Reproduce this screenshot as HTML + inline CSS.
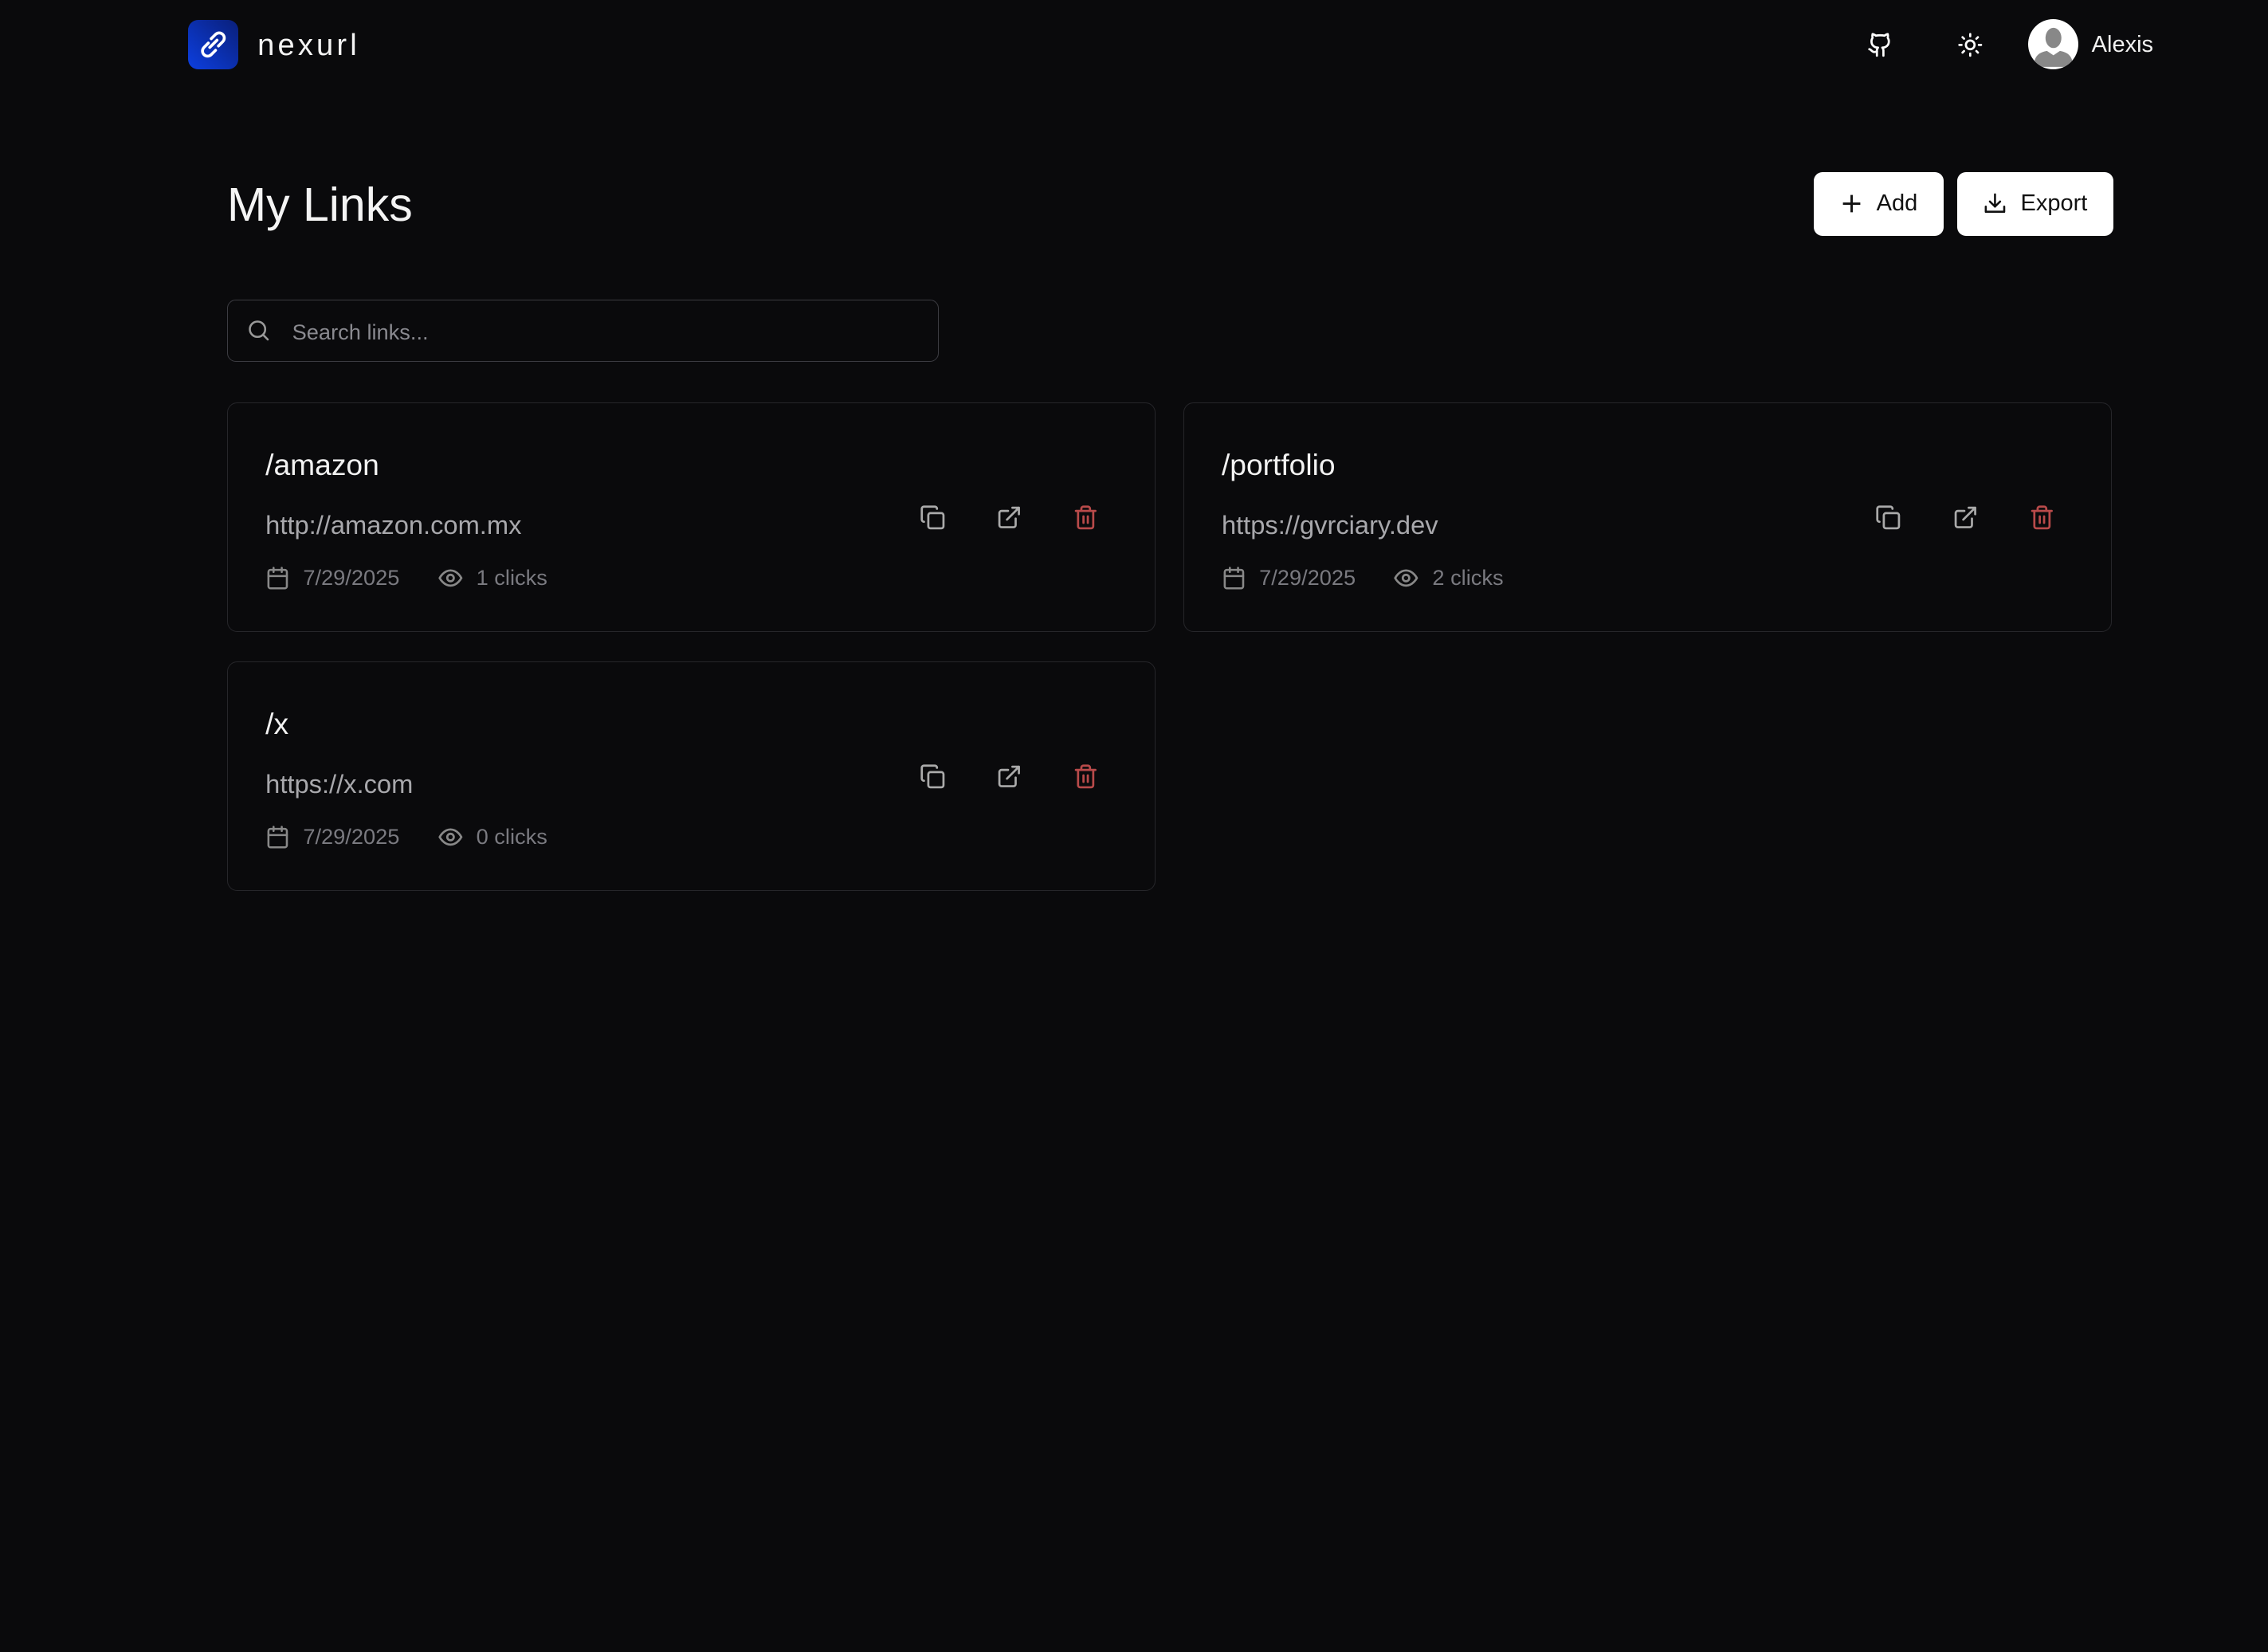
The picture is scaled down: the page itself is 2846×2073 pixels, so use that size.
<!DOCTYPE html>
<html><head><meta charset="utf-8"><style>
html,body{margin:0;padding:0;background:#0a0a0c;}
body{zoom:1.8151;width:1568px;height:1142px;position:relative;overflow:hidden;font-family:"Liberation Sans",sans-serif;color:#fff;}
.a{position:absolute;}
.logo{left:130px;top:14px;width:35px;height:34px;border-radius:7px;background:linear-gradient(225deg,#0a1f7a,#0c3fe0);}
svg{display:block}
.btn{background:#fff;border-radius:6px;color:#111;font-size:16px;display:flex;align-items:center;justify-content:center;gap:9px;}
.card{border:1px solid #26262a;border-radius:7px;width:641px;height:158px;}
.card .t{position:absolute;left:26px;top:31px;font-size:20.5px;color:#f2f2f2;}
.card .u{position:absolute;left:26px;top:74px;font-size:18px;color:#a8a8ac;}
.card .m{position:absolute;left:26px;top:112px;font-size:15px;color:#7a7a80;display:flex;align-items:center;}
.card .ic{position:absolute;top:70px;}
</style></head><body>
<div class="a logo"><svg width="35" height="34" viewBox="0 0 35 34"><g fill="none" stroke="#fff" stroke-width="2" stroke-linecap="round"><path d="M16 13l3-3a3.5 3.5 0 015 5l-3 3"/><path d="M19 21l-3 3a3.5 3.5 0 01-5-5l3-3"/><path d="M15 19l5-5"/></g></svg></div>
<div class="a" style="left:178px;top:20px;font-size:21px;letter-spacing:2.3px;color:#f4f4f4;">nexurl</div>
<div class="a" style="left:1291px;top:22px"><svg width="18" height="18" viewBox="0 0 24 24" fill="none" stroke="#fff" stroke-width="2" stroke-linecap="round" stroke-linejoin="round"><path d="M15 22v-4a4.8 4.8 0 00-1-3.5c3 0 6-2 6-5.5.08-1.25-.27-2.48-1-3.5.28-1.150.28-2.35 0-3.5 0 0-1 0-3 1.5-2.64-.5-5.36-.5-8 0C6 2 5 2 5 2c-.3 1.15-.3 2.35 0 3.5A5.4 5.4 0 004 9c0 3.5 3 5.5 6 5.5-.39.49-.68 1.05-.85 1.65-.17.6-.22 1.23-.15 1.85v4"/><path d="M9 18c-4.51 2-5-2-7-2"/></svg></div>
<div class="a" style="left:1353px;top:22px"><svg width="18" height="18" viewBox="0 0 24 24" fill="none" stroke="#fff" stroke-width="2" stroke-linecap="round"><circle cx="12" cy="12" r="4"/><path d="M12 2v2M12 20v2M4.9 4.9l1.4 1.4M17.7 17.7l1.4 1.4M2 12h2M20 12h2M6.3 17.7l-1.4 1.4M19.1 4.9l-1.4 1.4"/></svg></div>
<div class="a" style="left:1402px;top:13px;width:35px;height:35px;border-radius:50%;background:#fff;overflow:hidden"><svg width="35" height="35" viewBox="0 0 35 35"><ellipse cx="17.5" cy="13" rx="5.5" ry="7" fill="#888"/><path d="M4 33c0-8 4-10 9-11l4.5 3 4.5-3c5 1 9 3 9 11z" fill="#888"/></svg></div>
<div class="a" style="left:1446px;top:22px;font-size:16px;color:#f2f2f2">Alexis</div>

<div class="a" style="left:157px;top:123px;font-size:32.5px;color:#f4f4f4">My Links</div>
<div class="a btn" style="left:1254px;top:119px;width:90px;height:44px"><svg width="16" height="16" viewBox="0 0 16 16" stroke="#111" stroke-width="1.6"><path d="M8 2v12M2 8h12"/></svg>Add</div>
<div class="a btn" style="left:1353px;top:119px;width:108px;height:44px"><svg width="17" height="17" viewBox="0 0 24 24" fill="none" stroke="#111" stroke-width="2" stroke-linecap="round" stroke-linejoin="round"><path d="M3 15v5h18v-5M7 10l5 5 5-5M12 15V3"/></svg>Export</div>

<div class="a" style="left:157px;top:207px;width:491px;height:42px;border:1px solid #3c3c42;border-radius:6px"></div>
<div class="a" style="left:170px;top:220px"><svg width="17" height="17" viewBox="0 0 24 24" fill="none" stroke="#999" stroke-width="2" stroke-linecap="round"><circle cx="11" cy="11" r="7.5"/><path d="M21 21l-4.3-4.3"/></svg></div>
<div class="a" style="left:202px;top:221px;font-size:15px;color:#8a8a90">Search links...</div>

<div class="a card" style="left:157px;top:278px">
<div class="t">/amazon</div><div class="u">http://amazon.com.mx</div>
<div class="m"><svg width="17" height="17" viewBox="0 0 24 24" fill="none" stroke="#888" stroke-width="2" stroke-linecap="round"><rect x="3" y="4" width="18" height="18" rx="2"/><path d="M16 2v4M8 2v4M3 10h18"/></svg><span style="margin-left:9px">7/29/2025</span><svg style="margin-left:26px" width="18" height="18" viewBox="0 0 24 24" fill="none" stroke="#888" stroke-width="2"><path d="M2 12s3.5-7 10-7 10 7 10 7-3.5 7-10 7S2 12 2 12z"/><circle cx="12" cy="12" r="3"/></svg><span style="margin-left:9px">1 clicks</span></div>
<div class="ic" style="left:478px"><svg width="18" height="18" viewBox="0 0 24 24" fill="none" stroke="#aaa" stroke-width="2" stroke-linecap="round"><rect x="8" y="8" width="14" height="14" rx="2"/><path d="M4 16c-1.1 0-2-.9-2-2V4c0-1.1.9-2 2-2h10c1.1 0 2 .9 2 2"/></svg></div>
<div class="ic" style="left:531px"><svg width="18" height="18" viewBox="0 0 24 24" fill="none" stroke="#aaa" stroke-width="2" stroke-linecap="round" stroke-linejoin="round"><path d="M18 13v6a2 2 0 01-2 2H5a2 2 0 01-2-2V8a2 2 0 012-2h6M15 3h6v6M10 14L21 3"/></svg></div>
<div class="ic" style="left:584px"><svg width="18" height="18" viewBox="0 0 24 24" fill="none" stroke="#b84a4a" stroke-width="2" stroke-linecap="round"><path d="M3 6h18M19 6v14a2 2 0 01-2 2H7a2 2 0 01-2-2V6M8 6V4a2 2 0 012-2h4a2 2 0 012 2v2M10 11v6M14 11v6"/></svg></div>
</div>

<div class="a card" style="left:818px;top:278px">
<div class="t">/portfolio</div><div class="u">https://gvrciary.dev</div>
<div class="m"><svg width="17" height="17" viewBox="0 0 24 24" fill="none" stroke="#888" stroke-width="2" stroke-linecap="round"><rect x="3" y="4" width="18" height="18" rx="2"/><path d="M16 2v4M8 2v4M3 10h18"/></svg><span style="margin-left:9px">7/29/2025</span><svg style="margin-left:26px" width="18" height="18" viewBox="0 0 24 24" fill="none" stroke="#888" stroke-width="2"><path d="M2 12s3.5-7 10-7 10 7 10 7-3.5 7-10 7S2 12 2 12z"/><circle cx="12" cy="12" r="3"/></svg><span style="margin-left:9px">2 clicks</span></div>
<div class="ic" style="left:478px"><svg width="18" height="18" viewBox="0 0 24 24" fill="none" stroke="#aaa" stroke-width="2" stroke-linecap="round"><rect x="8" y="8" width="14" height="14" rx="2"/><path d="M4 16c-1.1 0-2-.9-2-2V4c0-1.1.9-2 2-2h10c1.1 0 2 .9 2 2"/></svg></div>
<div class="ic" style="left:531px"><svg width="18" height="18" viewBox="0 0 24 24" fill="none" stroke="#aaa" stroke-width="2" stroke-linecap="round" stroke-linejoin="round"><path d="M18 13v6a2 2 0 01-2 2H5a2 2 0 01-2-2V8a2 2 0 012-2h6M15 3h6v6M10 14L21 3"/></svg></div>
<div class="ic" style="left:584px"><svg width="18" height="18" viewBox="0 0 24 24" fill="none" stroke="#b84a4a" stroke-width="2" stroke-linecap="round"><path d="M3 6h18M19 6v14a2 2 0 01-2 2H7a2 2 0 01-2-2V6M8 6V4a2 2 0 012-2h4a2 2 0 012 2v2M10 11v6M14 11v6"/></svg></div>
</div>

<div class="a card" style="left:157px;top:457px">
<div class="t">/x</div><div class="u">https://x.com</div>
<div class="m"><svg width="17" height="17" viewBox="0 0 24 24" fill="none" stroke="#888" stroke-width="2" stroke-linecap="round"><rect x="3" y="4" width="18" height="18" rx="2"/><path d="M16 2v4M8 2v4M3 10h18"/></svg><span style="margin-left:9px">7/29/2025</span><svg style="margin-left:26px" width="18" height="18" viewBox="0 0 24 24" fill="none" stroke="#888" stroke-width="2"><path d="M2 12s3.5-7 10-7 10 7 10 7-3.5 7-10 7S2 12 2 12z"/><circle cx="12" cy="12" r="3"/></svg><span style="margin-left:9px">0 clicks</span></div>
<div class="ic" style="left:478px"><svg width="18" height="18" viewBox="0 0 24 24" fill="none" stroke="#aaa" stroke-width="2" stroke-linecap="round"><rect x="8" y="8" width="14" height="14" rx="2"/><path d="M4 16c-1.1 0-2-.9-2-2V4c0-1.1.9-2 2-2h10c1.1 0 2 .9 2 2"/></svg></div>
<div class="ic" style="left:531px"><svg width="18" height="18" viewBox="0 0 24 24" fill="none" stroke="#aaa" stroke-width="2" stroke-linecap="round" stroke-linejoin="round"><path d="M18 13v6a2 2 0 01-2 2H5a2 2 0 01-2-2V8a2 2 0 012-2h6M15 3h6v6M10 14L21 3"/></svg></div>
<div class="ic" style="left:584px"><svg width="18" height="18" viewBox="0 0 24 24" fill="none" stroke="#b84a4a" stroke-width="2" stroke-linecap="round"><path d="M3 6h18M19 6v14a2 2 0 01-2 2H7a2 2 0 01-2-2V6M8 6V4a2 2 0 012-2h4a2 2 0 012 2v2M10 11v6M14 11v6"/></svg></div>
</div>
</body></html>
